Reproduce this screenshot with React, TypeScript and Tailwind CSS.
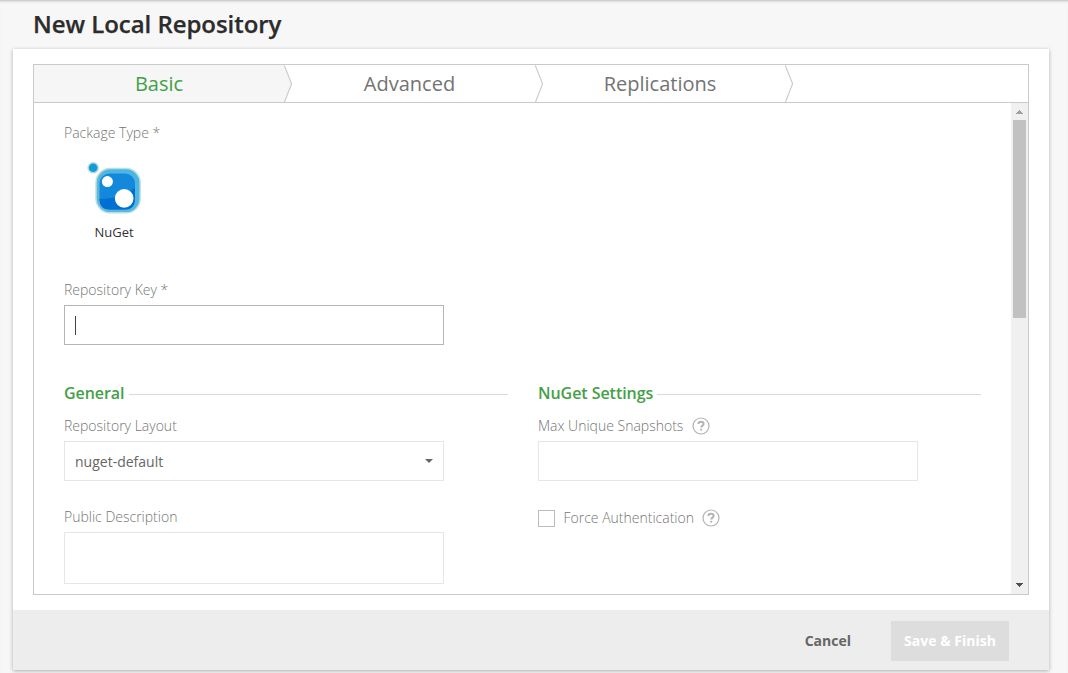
import React from 'react';

const labelClass = 'block h-5 text-[14px] leading-5 font-light text-[#757575] whitespace-nowrap';

function Chevron() {
  return (
    <svg className="absolute right-[-9px] top-0 z-10 h-[38px] w-[9px]" viewBox="0 0 9 38">
      <path d="M0 0L7.6 18.7L0 37Z" />
      <path d="M0.3 0.5L7.6 18.7L0.3 37.5" fill="none" stroke="#cacaca" strokeWidth="1.1" />
    </svg>
  );
}

function Tab({ label, active = false }: { label: string; active?: boolean }) {
  return (
    <div
      className={`relative flex h-[37px] items-center justify-center text-[20px] leading-none ${
        active ? 'bg-[#f6f6f6] fill-[#f6f6f6] text-[#43a047]' : 'bg-white fill-white text-[#737373]'
      }`}
    >
      {label}
      <Chevron />
    </div>
  );
}

function SectionTitle({ title }: { title: string }) {
  return (
    <div className="flex h-6 items-center">
      <h2 className="text-[16px] leading-6 font-semibold tracking-[-0.05px] whitespace-nowrap text-[#43a047]">{title}</h2>
      <div className="mt-[2px] ml-1 h-px flex-1 bg-[#dadada]" />
    </div>
  );
}

function HelpIcon() {
  return (
    <svg className="-mt-px h-[18px] w-[18px]" viewBox="0 0 18 18" fill="none" stroke="#b2b2b2">
      <circle cx="9" cy="9" r="8" strokeWidth="1.2" />
      <path d="M6.4 7.1C6.4 5.6 7.5 4.8 9 4.8S11.6 5.6 11.6 7C11.6 8.6 9.2 8.7 9.2 10.6" strokeWidth="1.9" />
      <path d="M9.2 11.8V13.6" strokeWidth="1.9" />
    </svg>
  );
}

function NuGetIcon() {
  return (
    <svg className="h-[54px] w-[56px]" viewBox="0 0 56 54">
      <defs>
        <linearGradient id="rim" x1="0" y1="1" x2="1" y2="0">
          <stop offset="0" stopColor="#62b9d6" />
          <stop offset="1" stopColor="#46b5e8" />
        </linearGradient>
      </defs>
      <circle cx="7.2" cy="7.8" r="5.8" fill="#b5dcdf" />
      <circle cx="7.2" cy="7.8" r="4.3" fill="#139bd8" />
      <rect x="9.3" y="7.8" width="45.6" height="45.8" rx="15" fill="#b9dfdf" />
      <rect x="10.8" y="9.3" width="42.6" height="42.8" rx="13.5" fill="url(#rim)" />
      <rect x="13.5" y="13.6" width="35.5" height="36" rx="10" fill="#1488da" />
      <path d="M13.5 38.9C28 38.9 40 35.4 49 27.4V39.6Q49 49.6 39 49.6H23.5Q13.5 49.6 13.5 39.6Z" fill="#006fd4" />
      <circle cx="21.4" cy="21.6" r="5.5" fill="#fff" />
      <circle cx="38.2" cy="38.4" r="9.3" fill="#fff" />
    </svg>
  );
}

function Scrollbar() {
  return (
    <div className="flex h-full w-[17px] flex-col items-center bg-[#f0f0f0]">
      <div className="flex h-[17px] items-center">
        <svg className="h-1 w-[7px]" viewBox="0 0 7 4" shapeRendering="crispEdges">
          <path d="M3 0H4V1H5V2H6V3H7V4H0V3H1V2H2V1H3Z" fill="#a0a0a0" />
        </svg>
      </div>
      <div className="h-[198px] w-[13px] bg-[#c1c1c1]" />
      <div className="flex-1" />
      <div className="flex h-[17px] items-start pt-[6px]">
        <svg className="h-1 w-[7px]" viewBox="0 0 7 4" shapeRendering="crispEdges">
          <path d="M0 0H7V1H6V2H5V3H4V4H3V3H2V2H1V1H0Z" fill="#505050" />
        </svg>
      </div>
    </div>
  );
}

export default function App() {
  return (
    <div className="h-[673px] w-[1068px] overflow-hidden border-t border-[#cfcfcf] bg-[#f7f7f7] font-['Open_Sans',sans-serif] shadow-[inset_0_2px_2px_-1px_#d9d9d9]">
      <header className="flex h-12 items-start pt-[7px] pl-[33px]">
        <h1 className="text-[24px] leading-8 font-semibold tracking-[-0.05px] text-[#2c2c2c] [-webkit-text-stroke:0.25px_#2c2c2c]">New Local Repository</h1>
      </header>

      <main className="ml-[13px] flex h-[621px] w-[1036px] flex-col bg-white shadow-[0_1px_4px_rgba(0,0,0,0.3)]">
        <div className="px-5 pt-[15px] pb-[15px]">
          <div className="h-[531px] border border-[#cacaca]">
            <nav className="grid h-[38px] grid-cols-[250px_251px_250px_1fr] border-b border-[#cacaca]">
              <Tab label="Basic" active />
              <Tab label="Advanced" />
              <Tab label="Replications" />
            </nav>

            <div className="flex h-[491px] overflow-hidden">
              <div className="flex-1 pl-[30px]">
                <div className="pt-5">
                  <label className={labelClass}>Package Type *</label>
                  <div className="mt-[17px] flex w-[100px] flex-col items-center">
                    <NuGetIcon />
                    <span className="mt-[9px] text-[13px] leading-[18px] text-[#333]">NuGet</span>
                  </div>
                </div>

                <div className="mt-[39px]">
                  <label className={labelClass}>Repository Key *</label>
                  <div className="mt-[5px] flex h-10 w-[380px] items-center border border-[#b5b5b5] pl-[10px]">
                    <div className="h-[19px] w-px bg-[#444]" />
                  </div>
                </div>

                <div className="mt-9 flex gap-[30px]">
                  <section className="w-[444px]">
                    <SectionTitle title="General" />
                    <label className={`${labelClass} mt-[11px]`}>Repository Layout</label>
                    <div className="mt-[5px] flex h-10 w-[380px] items-center justify-between border border-[#e6e6e6] pr-[10px] pl-[10px] text-[14px] text-[#666]">
                      nuget-default
                      <svg className="h-1 w-2" viewBox="0 0 8 4">
                        <path d="M0 0H8L4 4Z" fill="#666" />
                      </svg>
                    </div>
                    <label className={`${labelClass} mt-[26px]`}>Public Description</label>
                    <div className="mt-[5px] h-[52px] w-[380px] border border-[#e6e6e6]" />
                  </section>

                  <section className="w-[443px]">
                    <SectionTitle title="NuGet Settings" />
                    <div className="mt-[11px] flex h-5 items-center gap-[8.5px]">
                      <label className={labelClass}>Max Unique Snapshots</label>
                      <HelpIcon />
                    </div>
                    <div className="mt-[5px] h-10 w-[380px] border border-[#e6e6e6]" />
                    <div className="mt-[27px] flex h-5 items-center">
                      <div className="h-[17px] w-[17px] border border-[#bcbcbc]" />
                      <label className={`${labelClass} ml-[8.5px]`}>Force Authentication</label>
                      <span className="ml-[8.5px]">
                        <HelpIcon />
                      </span>
                    </div>
                  </section>
                </div>
              </div>
              <Scrollbar />
            </div>
          </div>
        </div>

        <footer className="flex h-[60px] items-center justify-end gap-10 bg-[#ededed] pr-10 text-[14px] font-bold">
          <button className="text-[#666]">Cancel</button>
          <button className="mt-[2px] h-10 w-[118px] bg-[#dddddd] pb-[1px] text-white">Save &amp; Finish</button>
        </footer>
      </main>
    </div>
  );
}
